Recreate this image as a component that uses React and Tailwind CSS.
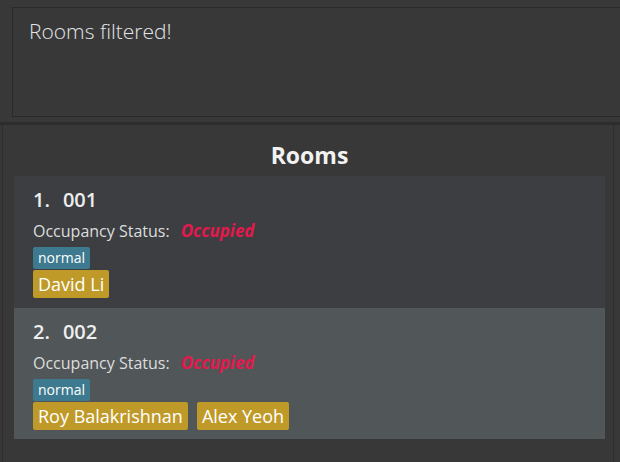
import React from "react";

const rooms = [
  { idx: 1, num: "001", status: "Occupied", tags: ["normal"], guests: ["David Li"], bg: "bg-[#3c3e41]", h: "h-[132px]" },
  { idx: 2, num: "002", status: "Occupied", tags: ["normal"], guests: ["Roy Balakrishnan", "Alex Yeoh"], bg: "bg-[#515658]", h: "h-[131px]" },
];

function RoomCard({ room }) {
  return (
    <div className={`${room.bg} ${room.h} pl-[19px] pt-[10px]`}>
      <div className="flex text-[20px] font-semibold leading-[27px] text-[#eeeeee]">
        <span>{room.idx}.</span>
        <span className="ml-[13px]">{room.num}</span>
      </div>
      <div className="mt-[8px] flex items-baseline text-[16px] leading-[20px] text-[#dddddd]">
        <span>Occupancy Status:</span>
        <span className="ml-[11px] text-[17px] font-bold italic text-[#e3194d]">{room.status}</span>
      </div>
      <div className="mt-[6px] flex gap-[10px]">
        {room.tags.map((t) => (
          <span key={t} className="h-[22px] rounded-[2px] bg-[#3d7a90] px-[5px] text-[14px] leading-[22px] text-white">
            {t}
          </span>
        ))}
      </div>
      <div className="mt-[1px] flex gap-[9px]">
        {room.guests.map((g) => (
          <span key={g} className="h-[28px] rounded-[2px] bg-[#c09a29] px-[5px] text-[18px] font-medium leading-[28px] text-white">
            {g}
          </span>
        ))}
      </div>
    </div>
  );
}

export default function App() {
  return (
    <div className="flex h-[462px] w-[620px] flex-col overflow-hidden bg-[#383838] font-['Open_Sans',sans-serif]">
      <div className="h-[125px] shrink-0 border-b-[3px] border-[#2d2d2d] pl-[12px] pt-[7px]">
        <div className="-mr-[4px] h-[110px] border border-[#2a2a2a] pl-[16px] pt-[9px] text-[21px] font-light leading-[28px] text-[#e2e4e8]">
          Rooms filtered!
        </div>
      </div>
      <div className="ml-[2px] mr-[6px] flex-1 border-x border-[#2e2e2e] pl-[11px] pr-[8px] pt-[15px]">
        <div className="text-center text-[23px] font-bold leading-[31px] text-[#f2f2f2]">Rooms</div>
        <div className="mt-[5px] flex flex-col">
          {rooms.map((r) => (
            <RoomCard key={r.idx} room={r} />
          ))}
        </div>
      </div>
    </div>
  );
}
